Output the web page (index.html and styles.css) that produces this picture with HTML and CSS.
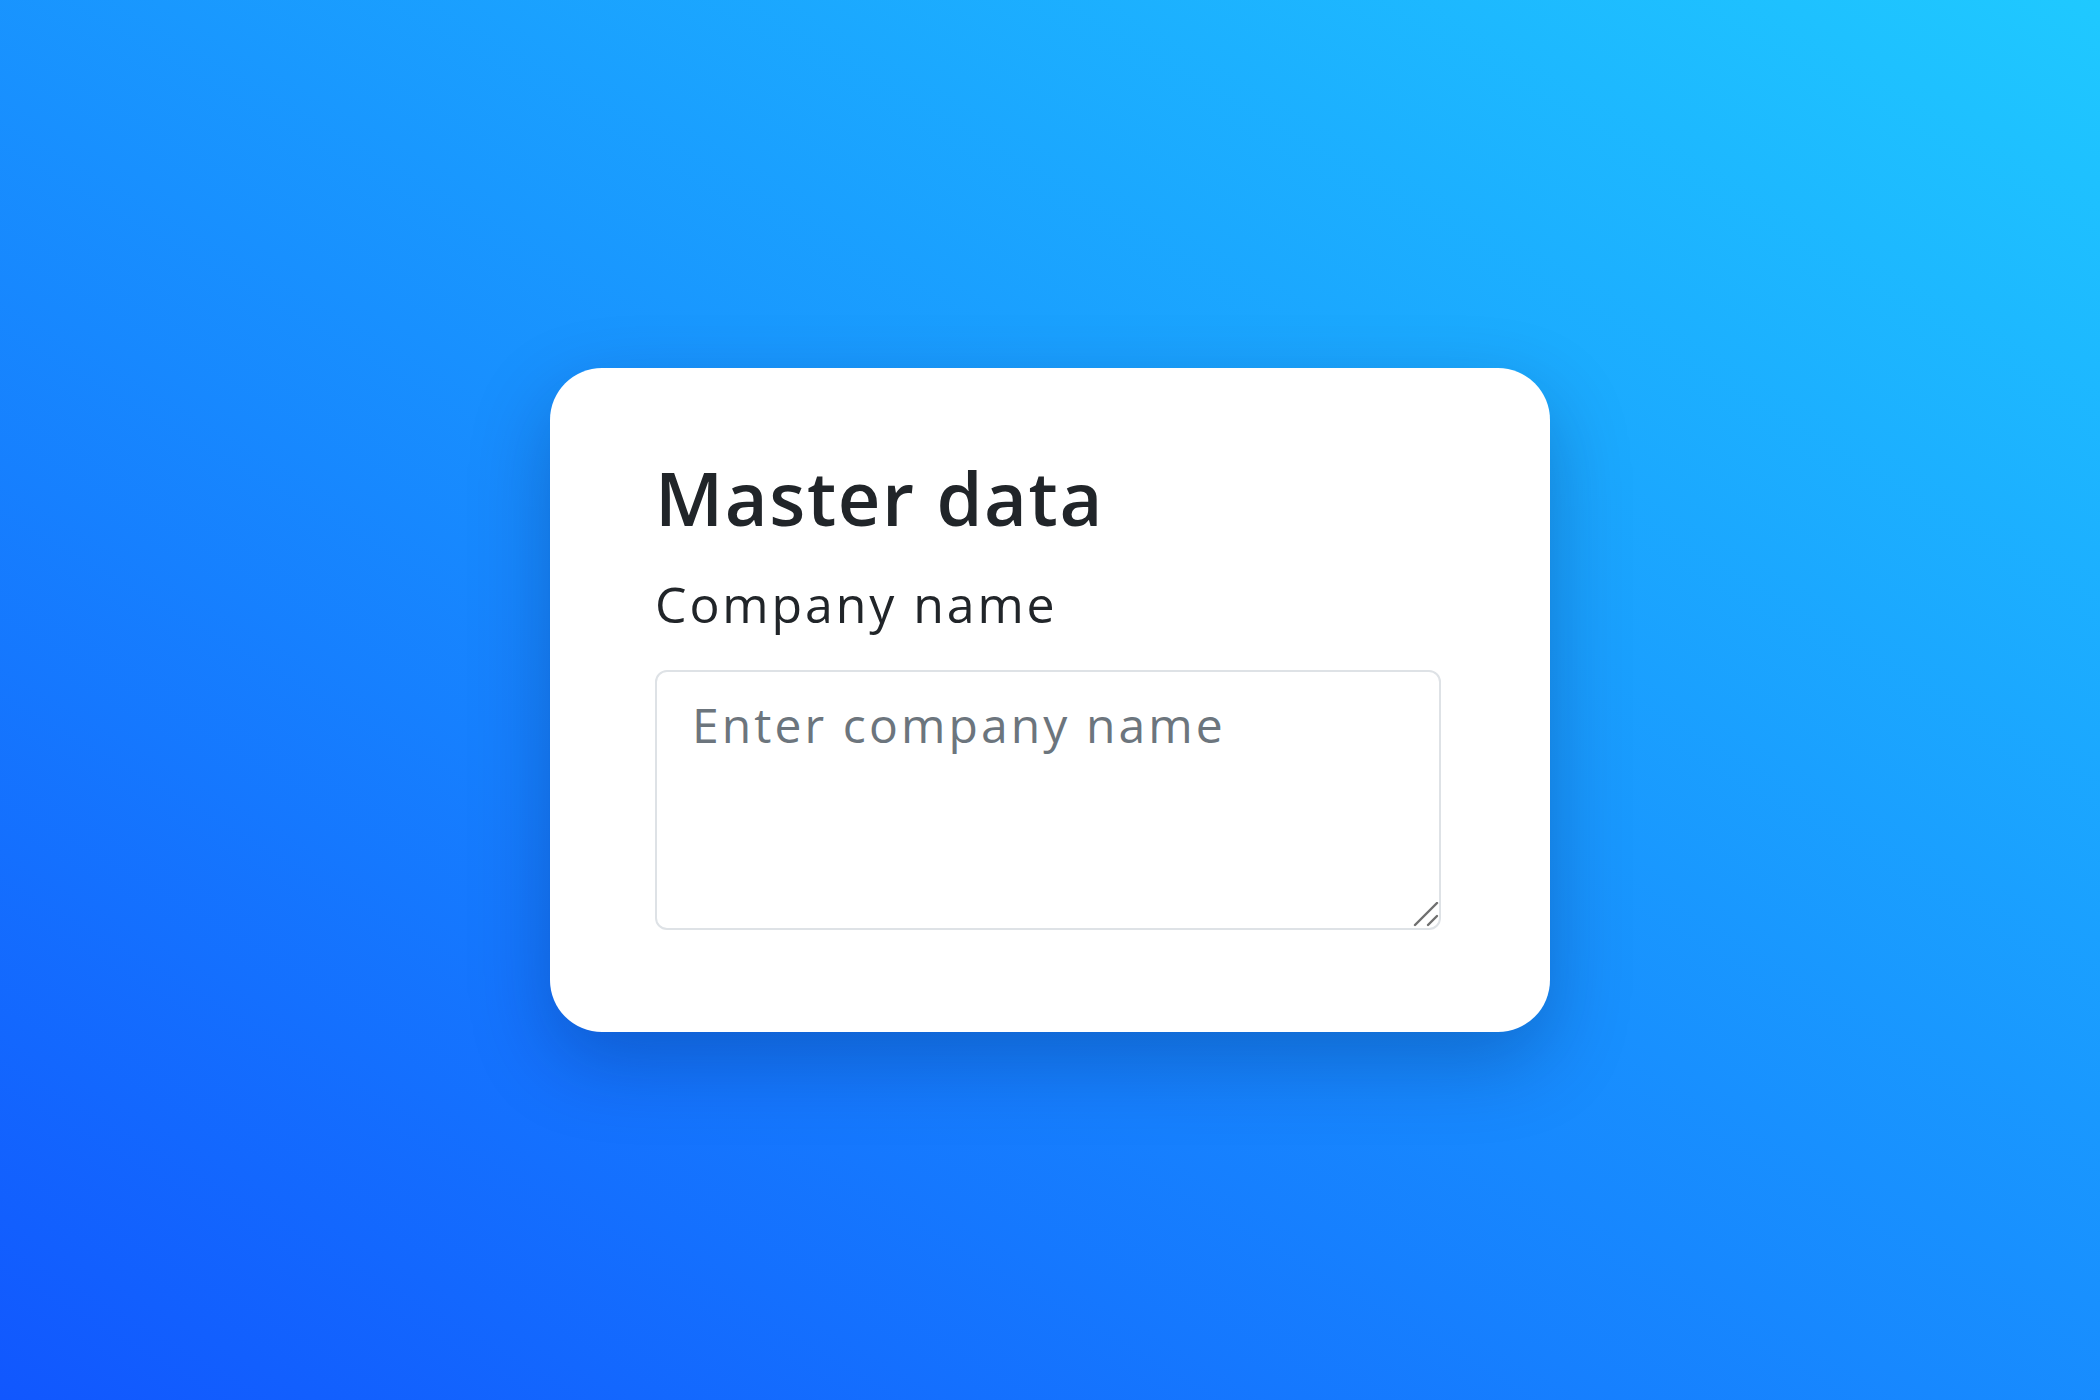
FILE: index.html
```html
<!DOCTYPE html>
<html lang="en">
<head>
<meta charset="utf-8">
<title>Master data</title>
<link rel="stylesheet" href="styles.css">
</head>
<body>
  <main class="stage">
    <section class="card">
      <h1 class="card-title">Master data</h1>
      <label class="field-label" for="company">Company name</label>
      <div class="field-wrap">
        <textarea id="company" class="field-input" placeholder="Enter company name"></textarea>
        <svg class="field-grip" width="26" height="26" viewBox="0 0 26 26" aria-hidden="true">
          <line x1="2" y1="23" x2="24" y2="1" />
          <line x1="15" y1="23" x2="24" y2="14" />
        </svg>
      </div>
    </section>
  </main>
</body>
</html>
```

FILE: styles.css
```css
html, body {
  margin: 0;
  padding: 0;
  height: 100%;
}

body {
  font-family: "Open Sans", "Noto Sans", sans-serif;
  background: linear-gradient(30deg, #1157fe 0%, #1fc9ff 100%);
  color: #212529;
}

.stage {
  min-height: 100vh;
  display: flex;
  align-items: center;
  justify-content: center;
}

.card {
  box-sizing: border-box;
  width: 1000px;
  background: #ffffff;
  border-radius: 52px;
  padding: 86px 108px 102px 105px;
  box-shadow: 0 30px 80px rgba(0, 20, 80, 0.28);
  display: flex;
  flex-direction: column;
}

.card-title {
  margin: 0;
  font-size: 74px;
  font-weight: 600;
  line-height: 1.2;
  letter-spacing: 1.6px;
  color: #212529;
}

.field-label {
  margin-top: 24px;
  font-size: 50px;
  font-weight: 400;
  line-height: 1.5;
  letter-spacing: 2.9px;
  color: #212529;
}

.field-wrap {
  position: relative;
  margin-top: 28px;
  width: 786px;
  height: 260px;
}

.field-input {
  display: block;
  box-sizing: border-box;
  width: 100%;
  height: 100%;
  margin: 0;
  padding: 17px 35px 14px;
  border: 2px solid #dee2e6;
  border-radius: 12px;
  font-family: "Open Sans", "Noto Sans", sans-serif;
  font-size: 48px;
  line-height: 1.5;
  letter-spacing: 3.1px;
  color: #212529;
  background: #ffffff;
  resize: none;
  outline: none;
}

.field-input::placeholder {
  color: #6c757d;
  opacity: 1;
}

.field-grip {
  position: absolute;
  right: 2px;
  bottom: 2px;
  pointer-events: none;
}

.field-grip line {
  stroke: #6f6f6f;
  stroke-width: 2.4;
  stroke-linecap: round;
}
```
